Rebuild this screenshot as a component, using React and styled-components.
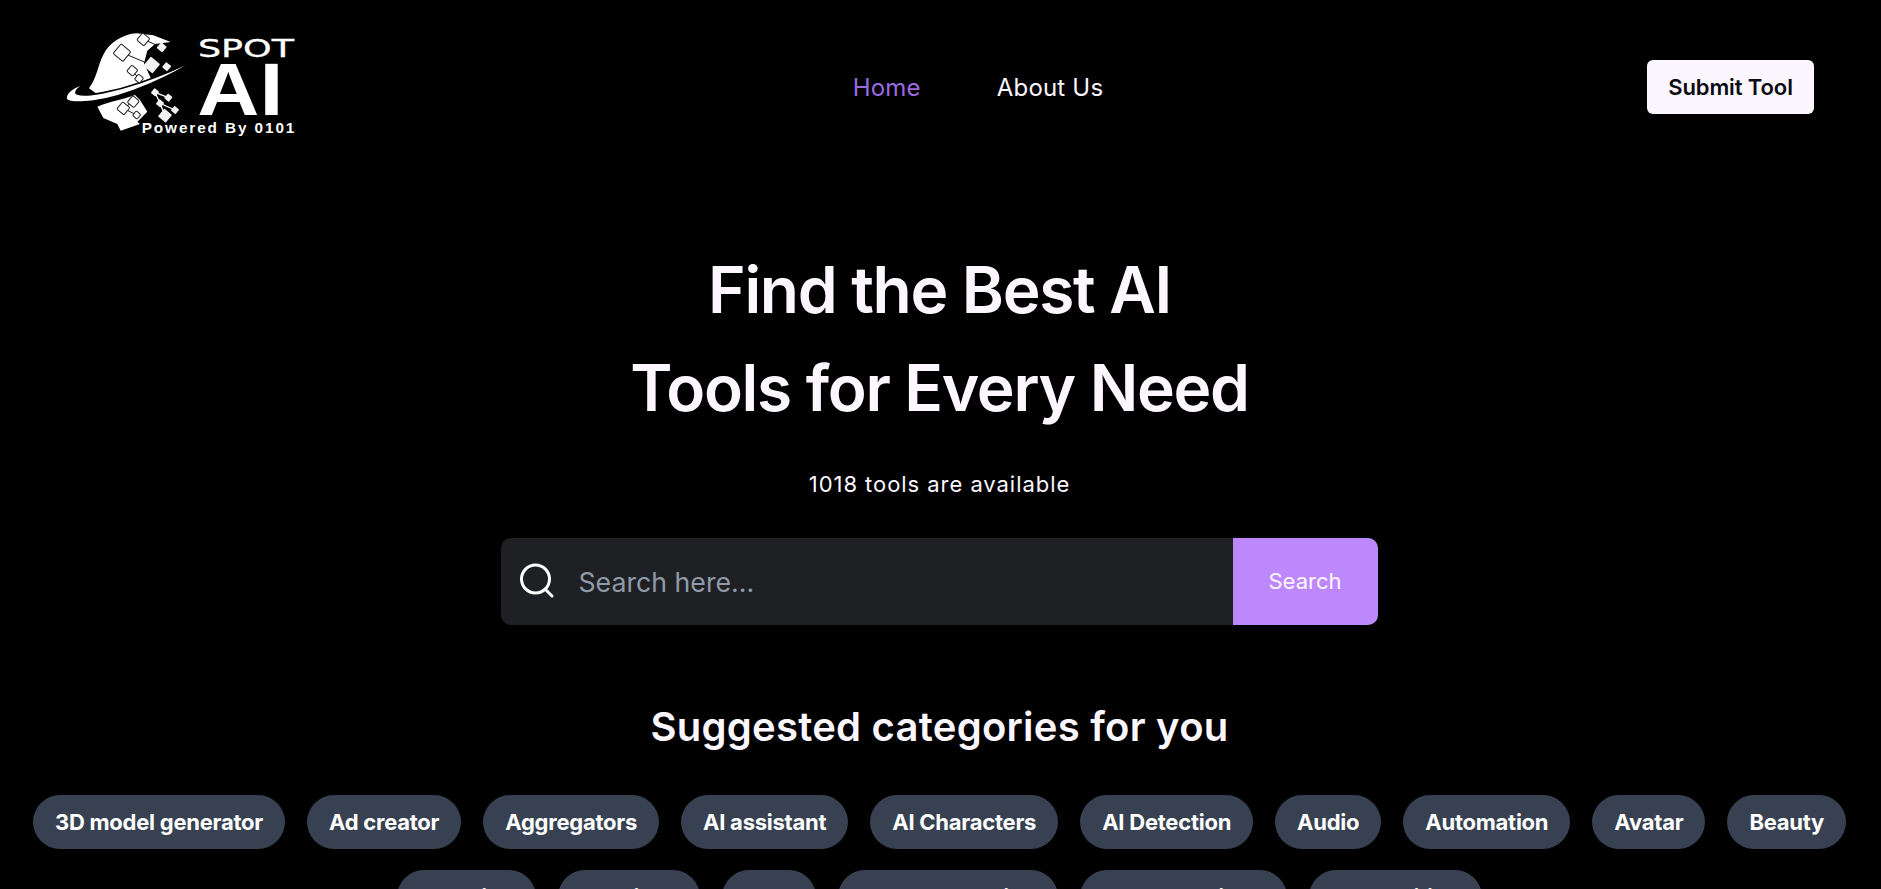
import React from 'react';
import styled, { createGlobalStyle } from 'styled-components';

const GlobalStyle = createGlobalStyle`
  html, body {
    margin: 0;
    padding: 0;
    background: #000;
    color: #fcf7ff;
    font-family: Inter, "Liberation Sans", sans-serif;
    overflow: hidden;
    height: 889px;
  }
`;

const Page = styled.div`
  background: #000;
  min-height: 889px;
`;

const Nav = styled.nav`
  display: grid;
  grid-template-columns: 1fr auto 1fr;
  align-items: center;
  height: 176px;
  padding: 0 67px 0 55px;
`;

const NavLinks = styled.ul`
  list-style: none;
  display: flex;
  gap: 76px;
  margin: 0 0 0 87px;
  padding: 0;
`;

const NavLink = styled.a`
  font-size: 24px;
  line-height: 36px;
  letter-spacing: 0.2px;
  text-decoration: none;
  color: ${props => (props.$active ? '#9a6be0' : '#fcf7ff')};
`;

const SubmitButton = styled.button`
  justify-self: end;
  height: 54px;
  width: 167px;
  margin-bottom: 2px;
  border: 0;
  border-radius: 6px;
  background: #fcf7ff;
  color: #0b0b12;
  font-family: inherit;
  font-size: 22px;
  font-weight: 600;
  letter-spacing: -0.1px;
`;

const Hero = styled.section`
  display: flex;
  flex-direction: column;
  align-items: center;
  padding: 65px 2px 0 0;
`;

const Title = styled.h1`
  margin: 0;
  font-size: 64px;
  line-height: 98px;
  font-weight: 600;
  letter-spacing: -1.3px;
  text-align: center;
  color: #fcf7ff;
`;

const Count = styled.p`
  margin: 31px 0 0;
  font-size: 22px;
  line-height: 33px;
  letter-spacing: 0.95px;
  color: #fcf7ff;
`;

const SearchBar = styled.form`
  display: flex;
  width: 877px;
  height: 87px;
  margin: 37px 1px 0 0;
  border-radius: 10px;
  overflow: hidden;
  background: #1f2023;
`;

const SearchIcon = styled.svg`
  flex: none;
  width: 36px;
  height: 36px;
  margin: 25px 24px 0 18px;
`;

const SearchInput = styled.input`
  flex: 1;
  min-width: 0;
  border: 0;
  outline: 0;
  padding: 0;
  background: transparent;
  color: #fcf7ff;
  font-family: inherit;
  font-size: 26.7px;

  &::placeholder {
    color: #8f9aa8;
    opacity: 1;
  }
`;

const SearchButton = styled.button`
  flex: none;
  width: 145px;
  padding: 0 0 2px;
  border: 0;
  background: #bd88fc;
  color: #fcf7ff;
  font-family: inherit;
  font-size: 22px;
`;

const CategoriesTitle = styled.h2`
  margin: 78px 0 0;
  font-size: 40px;
  line-height: 48px;
  font-weight: 600;
  letter-spacing: 0.25px;
  color: #fcf7ff;
`;

const Chips = styled.div`
  display: flex;
  flex-wrap: wrap;
  justify-content: center;
  gap: 21px 22px;
  margin-top: 44px;
  padding: 0 24px;
`;

const Chip = styled.a`
  display: block;
  height: 54px;
  padding: 0 22px;
  border-radius: 27px;
  background: #374151;
  color: #fff;
  font-size: 22px;
  line-height: 54px;
  font-weight: 700;
  letter-spacing: -0.25px;
  white-space: nowrap;
`;

const LogoMark = styled.svg`
  display: block;
  width: 280px;
  height: 130px;
  margin: -6px 0 0 -15px;
`;

const categories = [
  '3D model generator', 'Ad creator', 'Aggregators', 'AI assistant', 'AI Characters',
  'AI Detection', 'Audio', 'Automation', 'Avatar', 'Beauty',
  'Branding', 'Bookings', 'Cars', 'Content creation', 'Content builder', 'Copywriting',
];

// little rotated squares of the logo: x, y, size
const solidBlocks = [
  [365, 82, 22], [335, 135, 36], [380, 140, 20],
  [345, 217, 18], [385, 233, 18], [360, 250, 18], [405, 270, 18], [375, 287, 30],
];
const hollowBlocks = [
  [310, 58, 28], [246, 98, 38], [277, 152, 24], [297, 176, 20],
  [280, 245, 26], [250, 265, 28], [290, 285, 18],
];

function Logo() {
  return (
    <LogoMark viewBox="0 0 840 390" aria-label="Spot AI">
      <path fill="#fff" d="M290 40C248 42 208 68 190 104C174 134 172 170 147 205L176 226C240 218 290 200 335 180L312 130L322 92L345 72L392 66L340 46Z" />
      <path fill="#fff" d="M172 260C210 244 250 238 285 225L300 240L322 275L292 305L300 312L242 332L232 312L190 294Z" />
      <path fill="#fff" stroke="#000" strokeWidth="5" d="M479 112C400 165 262 230 160 243C118 248 76 250 78 232C80 216 104 200 136 189C115 204 100 218 112 222C140 232 230 212 300 188C370 165 430 138 479 112Z" />
      <path fill="none" stroke="#1c1c1c" strokeWidth="3" d="M310 58L365 82M246 98L335 135M277 152L297 176M250 265L290 285M280 245L250 265" />
      <path fill="none" stroke="#fff" strokeWidth="4" d="M345 217L385 233M345 217L360 250L405 270M360 250L375 287" />
      {hollowBlocks.map(([x, y, s]) => (
        <rect key={`${x}-${y}`} x={x - s / 2} y={y - s / 2} width={s} height={s} rx="4" fill="#fff" stroke="#1c1c1c" strokeWidth="3" transform={`rotate(40 ${x} ${y})`} />
      ))}
      {solidBlocks.map(([x, y, s]) => (
        <rect key={`${x}-${y}`} x={x - s / 2} y={y - s / 2} width={s} height={s} rx="2" fill="#f2f2f2" transform={`rotate(40 ${x} ${y})`} />
      ))}
      <text x="474" y="110" fill="#fff" stroke="#fff" strokeWidth="1" fontFamily="DejaVu Sans" fontSize="74" textLength="288" lengthAdjust="spacingAndGlyphs">SPOT</text>
      <text x="472" y="285" fill="#fff" fontFamily="Liberation Sans" fontWeight="700" fontSize="223" textLength="258" lengthAdjust="spacingAndGlyphs">AI</text>
      <text x="305" y="338" fill="#fff" fontFamily="Liberation Sans" fontWeight="700" fontSize="46" textLength="458" lengthAdjust="spacing">Powered By 0101</text>
    </LogoMark>
  );
}

function App() {
  return (
    <Page>
      <GlobalStyle />
      <Nav>
        <Logo />
        <NavLinks>
          <li><NavLink href="#home" $active>Home</NavLink></li>
          <li><NavLink href="#about">About Us</NavLink></li>
        </NavLinks>
        <SubmitButton>Submit Tool</SubmitButton>
      </Nav>
      <Hero>
        <Title>Find the Best AI<br />Tools for Every Need</Title>
        <Count>1018 tools are available</Count>
        <SearchBar onSubmit={e => e.preventDefault()}>
          <SearchIcon viewBox="0 0 36 36" fill="none" stroke="#fff" strokeWidth="3" strokeLinecap="round">
            <circle cx="16.5" cy="16" r="14" />
            <path d="M27 27l6 6" />
          </SearchIcon>
          <SearchInput placeholder="Search here..." />
          <SearchButton>Search</SearchButton>
        </SearchBar>
        <CategoriesTitle>Suggested categories for you</CategoriesTitle>
        <Chips>
          {categories.map(name => <Chip key={name}>{name}</Chip>)}
        </Chips>
      </Hero>
    </Page>
  );
}

export default App;
